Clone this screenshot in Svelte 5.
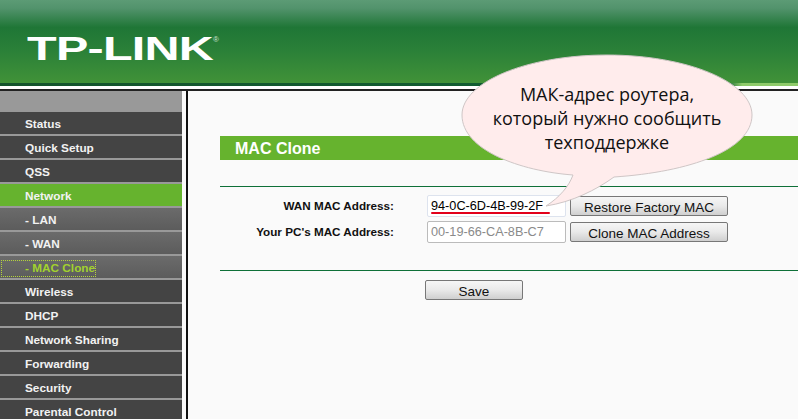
<script lang="ts">
    // Left menu of the router page; kind picks the row style.
    const menu = [
        { label: "Status", kind: "main" },
        { label: "Quick Setup", kind: "main" },
        { label: "QSS", kind: "main" },
        { label: "Network", kind: "active" },
        { label: "- LAN", kind: "sub" },
        { label: "- WAN", kind: "sub" },
        { label: "- MAC Clone", kind: "sub current" },
        { label: "Wireless", kind: "main" },
        { label: "DHCP", kind: "main" },
        { label: "Network Sharing", kind: "main" },
        { label: "Forwarding", kind: "main" },
        { label: "Security", kind: "main" },
        { label: "Parental Control", kind: "main" },
    ];
</script>

<div class="page">
    <header class="banner">
        <div class="logo"><span class="logo-text">TP-LINK</span><span class="reg">®</span></div>
    </header>
    <div class="rule-dark"></div>
    <div class="rule-white"></div>

    <div class="body">
        <nav class="side">
            <div class="side-top"></div>
            {#each menu as item}
                <div class="item {item.kind}"><span class="item-label">{item.label}</span></div>
            {/each}
        </nav>
        <main class="content">
            <div class="title">MAC Clone</div>
            <div class="line first"></div>
            <div class="form">
                <label class="lbl" for="wan">WAN MAC Address:</label>
                <div class="field filled" id="wan">94-0C-6D-4B-99-2F</div>
                <button class="btn">Restore Factory MAC</button>
                <label class="lbl" for="pc">Your PC's MAC Address:</label>
                <div class="field" id="pc">00-19-66-CA-8B-C7</div>
                <button class="btn">Clone MAC Address</button>
            </div>
            <div class="line second"></div>
            <div class="save-row"><button class="btn save">Save</button></div>
        </main>
    </div>

    <!-- annotation drawn over the screenshot -->
    <div class="underline"></div>
    <div class="callout">
        <svg width="798" height="419" viewBox="0 0 798 419">
            <path class="bubble" d="M573 175 C520 171 462 150 462 115 C462 82 527 55 607 55 C687 55 752 82 752 115 C752 150 690 172 614 177 C596 190 572 202 546 206 C560 197 569 186 573 175 Z" />
        </svg>
        <div class="bubble-text">
            <div>МАК-адрес роутера,</div>
            <div>который нужно сообщить</div>
            <div>техподдержке</div>
        </div>
    </div>
</div>

<style>
    :global(body) {
        margin: 0;
        background: #fafafa;
    }
    .page {
        position: relative;
        width: 798px;
        height: 419px;
        overflow: hidden;
        font-family: "Liberation Sans", Arial, sans-serif;
    }
    .banner {
        height: 83px;
        box-sizing: border-box;
        padding: 32px 0 0 27px;
        background: linear-gradient(180deg, #5c9b75 0%, #52936c 10%, #1f7636 33%, #2a8038 60%, #419238 100%);
    }
    .logo {
        display: flex;
        align-items: flex-start;
        color: #fff;
    }
    .logo-text {
        display: inline-block;
        font-size: 33px;
        font-weight: 700;
        line-height: 33px;
        transform: scaleX(1.47);
        transform-origin: left top;
        width: 186px;
        letter-spacing: -0.5px;
    }
    .reg {
        font-size: 8px;
        margin: 3px 0 0 0;
        color: #cfe3d4;
    }
    .rule-dark {
        height: 3px;
        background: linear-gradient(90deg, #14532c 0%, #0f6034 91%, #8fcb6a 93%, #8fcb6a 100%);
    }
    .rule-white {
        height: 3px;
        background: #fff;
    }
    .body {
        display: flex;
        height: 330px;
        border-top: 2px solid #222;
        box-sizing: border-box;
    }
    .side {
        width: 182px;
        flex: none;
        background: #999;
        overflow: hidden;
    }
    .side-top {
        height: 21px;
        background: #999;
    }
    .item {
        height: 22px;
        margin-bottom: 2px;
        padding-left: 25px;
        font-size: 11.8px;
        font-weight: 700;
        line-height: 24px;
        color: #f2f2f2;
        background: #444;
    }
    .item.active {
        background: #66b32e;
    }
    .item.sub {
        background: linear-gradient(180deg, #6b6b6b, #5c5c5c);
    }
    .item.current {
        padding-left: 1px;
        color: #a2d12e;
    }
    .item.current .item-label {
        display: inline-block;
        box-sizing: border-box;
        height: 17px;
        margin-top: 3px;
        padding-left: 23px;
        padding-right: 0;
        line-height: 15px;
        border: 1px dotted #b5d43a;
    }
    .content {
        flex: 1;
        margin-left: 4px;
        border-left: 2px solid #111;
        padding: 45px 0 0 32px;
        background: #fafafa;
    }
    .title {
        height: 24px;
        padding-left: 15px;
        font-size: 16px;
        font-weight: 700;
        line-height: 25px;
        color: #fff;
        background: #66b32e;
    }
    .line {
        height: 1px;
        background: #0e7038;
    }
    .line.first {
        margin-top: 26px;
    }
    .form {
        display: grid;
        grid-template-columns: 174px 139px auto;
        grid-auto-rows: 22px;
        column-gap: 33px;
        row-gap: 4px;
        margin-top: 8px;
    }
    .lbl {
        text-align: right;
        font-size: 11.7px;
        font-weight: 700;
        line-height: 22px;
        color: #111;
    }
    .field {
        margin-left: 0;
        box-sizing: border-box;
        padding-left: 3px;
        font-size: 12.7px;
        line-height: 20px;
        border: 1px solid #bbb;
        border-radius: 2px;
        color: #8a8a8a;
        background: #fff;
    }
    .field.filled {
        color: #000;
        border-color: #dde3ee;
    }
    .btn {
        box-sizing: border-box;
        width: 158px;
        height: 20px;
        margin: 1px 0 0 -29px;
        padding: 2px 0 0;
        font-family: inherit;
        font-size: 13.5px;
        line-height: 18px;
        color: #111;
        border: 1px solid #777;
        border-radius: 2px;
        background: linear-gradient(180deg, #f6f6f6 0%, #e9e9e9 50%, #cfcfcf 100%);
    }
    .line.second {
        margin-top: 27px;
    }
    .save-row {
        display: flex;
        margin-top: 9px;
        padding-left: 205px;
    }
    .btn.save {
        width: 98px;
        margin: 0;
    }
    .underline {
        position: absolute;
        left: 431px;
        top: 212px;
        width: 119px;
        height: 2px;
        border-radius: 1px;
        background: #e2001a;
    }
    .callout {
        position: absolute;
        left: 0;
        top: 0;
        width: 798px;
        height: 419px;
    }
    .bubble {
        fill: #ffecec;
        stroke: #cfc6c6;
        stroke-width: 1;
    }
    .bubble-text {
        position: absolute;
        left: 462px;
        top: 82px;
        width: 290px;
        text-align: center;
        font-family: "Open Sans", sans-serif;
        font-size: 18px;
        line-height: 24px;
        color: #111;
    }
</style>
